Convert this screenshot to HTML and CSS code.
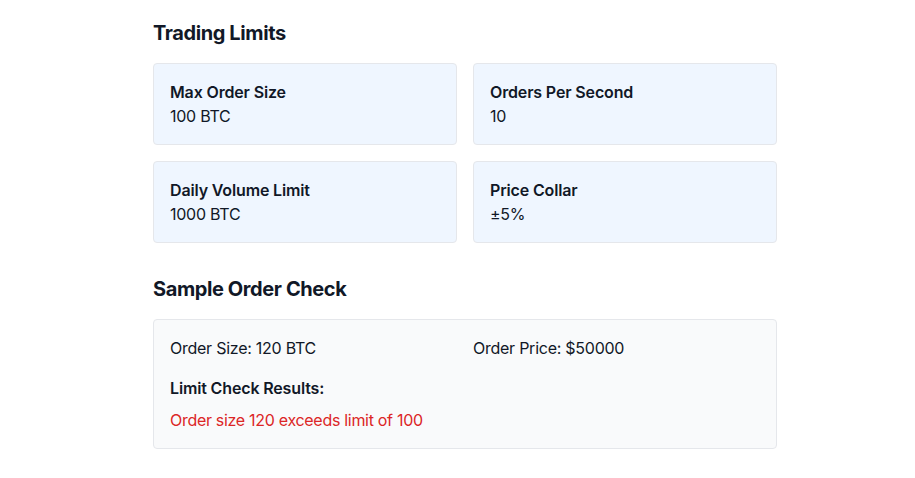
FILE: index.html
```html
<!DOCTYPE html>
<html>
<head>
<meta charset="utf-8">
<link rel="stylesheet" href="styles.css">
</head>
<body>
<main class="page">
  <section class="section">
    <h2 class="title">Trading Limits</h2>
    <div class="limits">
      <div class="limit-card">
        <div class="label">Max Order Size</div>
        <div class="value">100 BTC</div>
      </div>
      <div class="limit-card">
        <div class="label">Orders Per Second</div>
        <div class="value">10</div>
      </div>
      <div class="limit-card">
        <div class="label">Daily Volume Limit</div>
        <div class="value">1000 BTC</div>
      </div>
      <div class="limit-card">
        <div class="label">Price Collar</div>
        <div class="value">±5%</div>
      </div>
    </div>
  </section>
  <section class="section section-check">
    <h2 class="title">Sample Order Check</h2>
    <div class="check-card">
      <div class="check-grid">
        <div class="value">Order Size: 120 BTC</div>
        <div class="value">Order Price: $50000</div>
      </div>
      <div class="results">
        <div class="label">Limit Check Results:</div>
        <div class="error">Order size 120 exceeds limit of 100</div>
      </div>
    </div>
  </section>
</main>
</body>
</html>
```
FILE: styles.css
```css
* { box-sizing: border-box; }
html, body { margin: 0; padding: 0; background: #ffffff; }
body {
  font-family: Inter, "Liberation Sans", sans-serif;
  color: #111827;
  font-size: 16px;
  line-height: 24px;
}
.page {
  width: 624px;
  margin-left: 153px;
  padding-top: 19px;
}
.title {
  margin: 0 0 16px 0;
  font-size: 20px;
  line-height: 28px;
  font-weight: 700;
  color: #111827;
  letter-spacing: -0.4px;
}
.section-check { margin-top: 32px; }
.limits {
  display: grid;
  grid-template-columns: 1fr 1fr;
  gap: 16px;
}
.limit-card {
  background: #eff6ff;
  border: 1px solid #e5e7eb;
  border-radius: 4px;
  padding: 16px;
}
.label { font-weight: 600; letter-spacing: -0.15px; }
.value { font-weight: 400; letter-spacing: -0.25px; }
.check-card {
  background: #f9fafb;
  border: 1px solid #e5e7eb;
  border-radius: 4px;
  padding: 16px;
}
.check-grid {
  display: grid;
  grid-template-columns: 1fr 1fr;
  gap: 16px;
}
.results { margin-top: 16px; }
.error { color: #dc2626; margin-top: 8px; letter-spacing: -0.3px; }
```
